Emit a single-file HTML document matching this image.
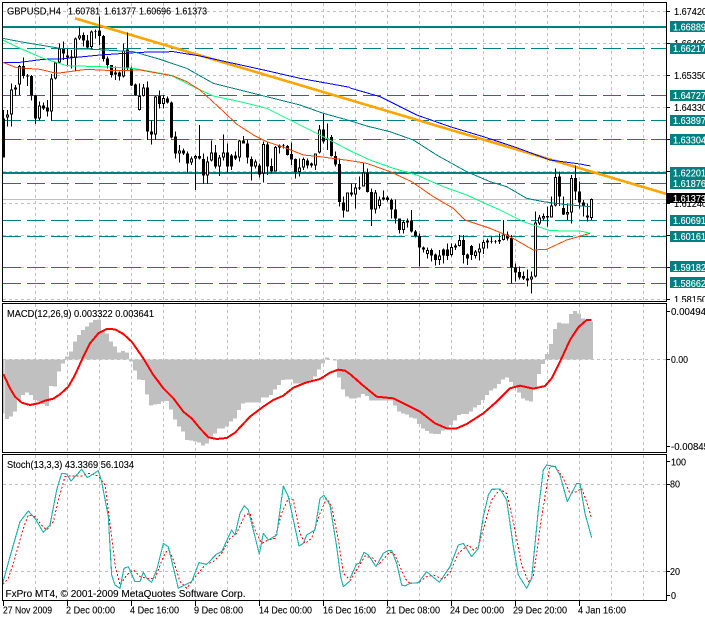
<!DOCTYPE html>
<html><head><meta charset="utf-8"><style>
html,body{margin:0;padding:0;background:#fff;width:705px;height:618px;overflow:hidden}
svg{display:block}
text{font-family:"Liberation Sans",sans-serif;font-size:10.5px;fill:#000;stroke:#000;stroke-width:.12px}
.w{fill:#fff;stroke:#fff}
</style></head><body>
<svg width="705" height="618" viewBox="0 0 705 618" xmlns="http://www.w3.org/2000/svg">
<rect width="705" height="618" fill="#fff"/>
<!-- grids -->
<g stroke="#c0c0c0" stroke-width="1" stroke-dasharray="3 3" fill="none" shape-rendering="crispEdges">
<path d="M35.5 3V301M67.5 3V301M99.5 3V301M131.5 3V301M163.5 3V301M195.5 3V301M227.5 3V301M259.5 3V301M291.5 3V301M323.5 3V301M355.5 3V301M387.5 3V301M419.5 3V301M451.5 3V301M483.5 3V301M515.5 3V301M547.5 3V301M579.5 3V301M611.5 3V301M643.5 3V301"/>
<path d="M35.5 304V452M67.5 304V452M99.5 304V452M131.5 304V452M163.5 304V452M195.5 304V452M227.5 304V452M259.5 304V452M291.5 304V452M323.5 304V452M355.5 304V452M387.5 304V452M419.5 304V452M451.5 304V452M483.5 304V452M515.5 304V452M547.5 304V452M579.5 304V452M611.5 304V452M643.5 304V452"/>
<path d="M35.5 455V600M67.5 455V600M99.5 455V600M131.5 455V600M163.5 455V600M195.5 455V600M227.5 455V600M259.5 455V600M291.5 455V600M323.5 455V600M355.5 455V600M387.5 455V600M419.5 455V600M451.5 455V600M483.5 455V600M515.5 455V600M547.5 455V600M579.5 455V600M611.5 455V600M643.5 455V600"/>
<path d="M3 11.5H666M3 43.5H666M3 75.5H666M3 107.5H666M3 139.5H666M3 171.5H666M3 203.5H666M3 235.5H666M3 267.5H666M3 299.5H666M3 359.5H666M3 484.5H666M3 571.5H666"/>
</g>
<path d="M3 199.5H666" stroke="#c0c0c0" shape-rendering="crispEdges"/>
<!-- level lines -->
<g stroke="#008080" fill="none" shape-rendering="crispEdges">
<path d="M3 27H666M3 173H666" stroke-width="2"/>
<path stroke-dasharray="18 6" d="M3 48.5H666M3 95.5H666M3 120.5H666M3 139.5H666M3 183.5H666M3 220.5H666M3 236.5H666M3 267.5H666M3 283.5H666"/>
</g>
<!-- trend -->
<path d="M75 18.3L666.7 194" stroke="#ffa500" stroke-width="2.6" fill="none" shape-rendering="crispEdges"/>
<!-- candles left -->
<g transform="translate(.167 0) scale(.33333)" fill="none" shape-rendering="crispEdges" stroke="#000">
<path stroke-width="3" d="M10 330V472M22 330V380M34 250V380M46 255V288M58 195V285M70 172V235M82 222V258M94 225V302M106 285V372M118 305V362M130 308V330M142 300V350M154 222V362M166 185V238M178 130V192M190 125V180M202 145V200M214 150V205M226 112V215M238 80V120M250 98V140M262 105V145M274 92V145M286 88V115M298 50V135M310 105V185M322 170V205M334 195V232M346 200V240M358 215V242M370 130V232M382 98V210M394 200V258M406 250V288M418 250V332M430 252V290M442 245V420M454 360V434M466 288V420M478 272V325M490 285V325M502 290V310M514 305V415M526 395V475M538 435V488M550 445V465M562 455V518M574 470V495M586 465V570M598 375V478M610 460V552M622 470V552M634 422V485M646 435V505M658 465V528M670 403V482M682 430V518M694 462V510M706 455V480M718 420V485M730 408V430M742 420V490M754 470V542M766 478V505M778 490V532M790 425V548M802 425V525M814 475V520M826 438V515M838 433V460M850 432V445M862 435V466M874 428V495M886 475V535M898 475V530M910 472V510M922 475V505M934 488V503M946 462V510M958 375V460M970 342V430M982 370V450M994 405V470M1006 455V500M1018 475V620M1030 590V652M1042 577V635"/>
<path stroke-width="9" d="M10 355V472M22 343V353M34 268V344M46 262V268M58 198V254M70 198V228M82 226V229M94 228V287M106 286V356M118 316V356M130 316V325M142 322V335M154 235V334M166 187V235M178 146V187M190 147V161M202 166V172M214 170V174M226 115V172M238 106V115M250 105V122M262 122V143M274 94V141M286 94V96M298 92V108M310 108V177M322 175V195M334 195V225M346 217V224M358 217V230M370 151V230M382 148V205M394 205V256M406 254V285M418 288V330M430 262V288M442 262V394M454 394V404M466 289V404M478 288V312M490 294V312M502 295V308M514 307V412M526 409V460M538 451V460M550 451V460M562 460V490M574 475V488M586 468V476M598 468V476M610 477V526M622 484V526M634 457V482M646 457V500M658 472V500M670 457V473M682 457V500M694 466V500M706 466V476M718 421V473M730 421V430M742 431V473M754 477V500M766 484V500M778 497V523M790 432V520M802 434V500M814 498V515M826 441V515M838 436V442M850 436V438M862 438V465M874 462V478M886 477V516M898 503V516M910 477V503M922 482V497M934 490V497M946 460V496M958 388V458M970 388V425M982 415V420M994 411V468M1006 468V494M1018 492V606M1030 607V632M1042 577V634"/>
<path stroke="#fff" stroke-width="3" d="M22 346V350M34 271V341M46 265V265M58 201V251M118 319V353M154 238V331M166 190V232M178 149V184M226 118V169M238 109V112M274 97V138M346 220V221M370 154V227M418 291V327M430 265V285M466 292V401M490 297V309M538 454V457M574 478V485M586 471V473M622 487V523M634 460V479M658 475V497M670 460V470M718 424V470M766 487V497M790 435V517M826 444V512M838 439V439M898 506V513M910 480V500M946 463V493M958 391V455M982 418V418M1042 580V631"/>
</g>
<!-- candles right -->
<g transform="translate(350.167 0) scale(.33333)" fill="none" shape-rendering="crispEdges" stroke="#000">
<path stroke-width="3" d="M4 550V590M16 550V625M28 530V570M40 490V560M52 505V578M64 565V678M76 570V640M88 590V625M100 572V602M112 588V605M124 595V655M136 598V670M148 655V700M160 660V700M172 655V682M184 630V698M196 690V712M208 700V800M220 740V758M232 742V775M244 745V785M256 760V797M268 750V795M280 745V790M292 730V780M304 730V770M316 730V750M328 705V740M340 705V790M352 760V795M364 735V780M376 750V775M388 730V782M400 720V762M412 715V745M424 710V730M436 720V730M448 700V732M460 660V722M472 695V722M484 705V850M496 790V845M508 800V838M520 815V840M532 808V860M544 815V880M556 635V832M568 645V675M580 640V662M592 620V680M604 590V652M616 505V620M628 515V618M640 590V645M652 610V660M664 525V670M676 497V600M688 545V625M700 600V650M712 610V665M724 595V660"/>
<path stroke-width="9" d="M4 577V583M16 562V584M28 562V566M40 518V560M52 518V576M64 576V628M76 577V628M88 598V618M100 592V598M112 592V600M124 600V628M136 628V656M148 655V690M160 666V690M172 661V667M184 661V694M196 694V708M208 708V743M220 743V748M232 750V762M244 750V766M256 764V780M268 766V780M280 748V766M292 748V768M304 741V765M316 737V742M328 720V738M340 720V765M352 764V775M364 738V765M376 755V768M388 745V758M400 726V746M412 722V728M424 724V726M436 723V725M448 720V724M460 703V720M472 703V716M484 714V802M496 802V818M508 816V833M520 828V836M532 836V842M544 829V838M556 667V830M568 652V670M580 648V655M592 648V652M604 616V652M616 531V616M628 530V590M640 624V643M652 636V643M664 534V638M676 534V574M688 574V608M700 607V618M712 646V652M724 597V654"/>
<path stroke="#fff" stroke-width="3" d="M16 565V581M40 521V557M76 580V625M88 601V615M100 595V595M160 669V687M172 664V664M232 753V759M268 769V777M304 744V762M316 740V740M328 723V735M376 758V765M388 748V755M400 729V743M412 725V725M448 722V722M460 706V717M544 832V835M556 670V827M568 655V667M580 651V652M604 619V649M616 534V613M652 639V640M664 537V635M724 600V651"/>
</g>
<!-- moving averages left -->
<g transform="scale(.33333)" fill="none" stroke-width="3" stroke-linejoin="round" shape-rendering="crispEdges">
<path stroke="#0000ff" d="M8 187L60 187 130 178 180 177 300 165 420 157 520 155 600 168 700 190 800 212 900 235 1050 262"/>
<path stroke="#008080" d="M8 115L60 125 180 145 280 148 400 155 480 178 560 205 640 250 720 270 800 290 900 315 970 340 1050 362"/>
<path stroke="#00ff7f" d="M8 120L60 145 130 175 200 197 300 200 400 205 510 225 590 265 640 288 720 305 800 325 880 365 960 405 1050 452"/>
<path stroke="#ff4500" d="M8 187L50 203 120 208 170 220 260 208 340 212 420 210 520 228 560 245 600 270 660 325 710 372 760 405 800 425 860 445 910 465 960 470 1050 482"/>
</g>
<g transform="translate(350 0) scale(.33333)" fill="none" stroke-width="3" stroke-linejoin="round" shape-rendering="crispEdges">
<path stroke="#0000ff" d="M0 264L90 290 200 345 300 380 400 410 500 443 600 480 690 492 722 498"/>
<path stroke="#008080" d="M0 362L50 378 120 395 190 420 260 465 350 515 420 545 470 560 530 595 580 605 640 613 720 620"/>
<path stroke="#00ff7f" d="M0 452L60 480 130 505 200 525 280 560 350 585 450 630 520 665 600 692 690 693 722 700"/>
<path stroke="#ff4500" d="M0 482L50 490 120 515 185 545 250 590 310 625 345 660 420 685 480 710 550 750 590 748 650 720 720 700"/>
</g>
<!-- MACD histogram -->
<g transform="translate(-.33 300) scale(.33333)" fill="none" stroke="#c0c0c0" stroke-width="12" shape-rendering="crispEdges">
<path d="M22 178V357M34 178V350M46 178V335M58 178V300M70 178V285M82 178V277M94 178V285M106 178V300M118 178V305M130 178V312M142 178V318M154 178V258M166 178V260M178 178V215M190 178V190M202 178V170M214 178V155M226 178V125M238 178V105M250 178V90M262 178V80M274 178V68M286 178V60M298 178V58M310 178V95M322 178V100M334 178V125M346 178V140M358 178V158M370 178V153M382 178V158M394 178V185M406 178V212M418 178V238M430 178V240M442 178V283M454 178V317M466 178V314M478 178V312M490 178V305M502 178V303M514 178V328M526 178V358M538 178V380M550 178V395M562 178V420M574 178V422M586 178V425M598 178V428M610 178V437M622 178V430M634 178V410M646 178V400M658 178V385M670 178V385M682 178V380M694 178V365M706 178V355M718 178V330M730 178V310M742 178V308M754 178V308M766 178V308M778 178V308M790 178V292M802 178V292M814 178V285M826 178V268M838 178V255M850 178V240M862 178V238M874 178V238M886 178V250M898 178V250M910 178V250M922 178V250M934 178V240M946 178V230M958 178V208M970 178V190M982 178V172M994 178V178M1006 178V182M1018 178V232M1030 178V268M1042 178V290"/>
<path stroke-width="6" d="M11 178V340"/>
</g>
<g transform="translate(349.67 300) scale(.33333)" fill="none" stroke="#c0c0c0" stroke-width="12" shape-rendering="crispEdges">
<path d="M4 178V295M16 178V296M28 178V292M40 178V282M52 178V288M64 178V302M76 178V302M88 178V302M100 178V302M112 178V302M124 178V302M136 178V316M148 178V335M160 178V340M172 178V343M184 178V352M196 178V355M208 178V372M220 178V385M232 178V393M244 178V400M256 178V402M268 178V402M280 178V392M292 178V388M304 178V375M316 178V362M328 178V345M340 178V342M352 178V342M364 178V335M376 178V322M388 178V315M400 178V300M412 178V285M424 178V272M436 178V265M448 178V252M460 178V238M472 178V232M484 178V246M496 178V262M508 178V278M520 178V295M532 178V302M544 178V305M556 178V262M568 178V222M580 178V192M592 178V162M604 178V132M616 178V87M628 178V67M640 178V70M652 178V70M664 178V42M676 178V33M688 178V40M700 178V55M712 178V58M724 178V65"/>
</g>
<path d="M3 359.5H666" stroke="#c0c0c0" stroke-dasharray="3 3" shape-rendering="crispEdges" opacity=".9"/>
<!-- MACD line -->
<g fill="none" stroke="#ff0000" stroke-width="6" stroke-linejoin="round" shape-rendering="crispEdges">
<path transform="translate(0 300) scale(.33333)" d="M10 222L30 265 45 290 65 308 90 315 115 310 135 302 160 296 180 283 205 260 225 225 250 170 270 130 295 100 320 87 345 88 370 102 395 125 430 175 460 225 490 265 520 295 550 335 575 355 600 385 625 412 650 417 680 414 705 398 750 350 790 320 820 300 850 287 880 263 920 247 960 237 990 218 1015 209 1035 212 1050 222"/>
<path transform="translate(350 300) scale(.33333)" d="M0 222L35 253 80 290 130 295 170 315 210 335 255 370 290 385 320 385 350 372 400 340 440 305 480 265 510 257 550 266 585 258 605 235 630 185 660 120 685 82 710 60 724 60"/>
</g>
<!-- Stoch -->
<g fill="none" stroke="#ff0000" stroke-width="3" stroke-dasharray="6 6" shape-rendering="crispEdges">
<path transform="translate(0 450) scale(.33333)" d="M8 403L25 385 40 340 70 235 85 195 105 200 125 225 140 240 160 215 175 150 195 80 215 78 245 78 265 70 295 78 315 105 330 220 345 345 360 405 380 375 400 360 420 380 440 385 465 385 490 320 505 295 520 330 540 395 560 415 590 375 615 345 640 335 665 310 690 265 710 250 735 195 750 190 765 240 785 280 805 270 825 265 845 190 865 145 880 150 900 250 915 280 935 265 960 190 980 145 995 170 1015 270 1030 370 1050 390"/>
<path transform="translate(350 450) scale(.33333)" d="M0 393L20 360 45 318 70 325 85 345 120 305 135 315 165 385 180 400 205 398 230 380 250 375 280 388 300 368 325 310 355 285 370 300 385 290 405 220 425 150 450 118 470 130 490 215 515 345 535 395 550 380 575 200 600 50 615 48 640 85 660 130 680 125 695 115 715 170 724 205"/>
</g>
<g fill="none" stroke="#20b2aa" stroke-width="3.4" stroke-linejoin="round" shape-rendering="crispEdges">
<path transform="translate(0 450) scale(.33333)" d="M8 400L30 320 60 215 85 183 105 205 130 247 150 225 170 120 185 70 200 72 213 93 245 58 262 83 295 62 305 95 325 200 335 375 345 405 360 415 372 355 385 350 405 395 420 395 430 367 440 385 455 397 470 360 490 280 505 290 535 415 575 395 597 338 620 343 650 312 665 305 695 240 705 255 720 190 733 167 745 180 778 312 790 250 805 270 830 255 850 108 865 140 897 288 910 280 920 255 945 240 960 145 972 136 990 165 1010 290 1022 380 1030 410 1050 393"/>
<path transform="translate(350 450) scale(.33333)" d="M0 385L20 342 28 340 42 307 55 315 78 350 100 310 115 301 125 301 140 340 155 405 165 408 180 400 205 398 230 365 268 397 300 350 325 285 340 280 365 320 385 295 400 200 415 135 425 118 450 117 470 150 490 290 505 375 530 415 545 385 565 180 580 60 590 45 615 50 630 75 652 155 680 100 690 100 705 190 725 263"/>
</g>
<!-- frames -->
<g fill="none" stroke="#000" stroke-width="1" shape-rendering="crispEdges">
<path d="M2.5 2.5H666.5V301.5H2.5ZM2.5 303.5H666.5V452.5H2.5ZM2.5 454.5H666.5V600.5H2.5Z"/>
<path d="M667 11.5H670M667 43.5H670M667 75.5H670M667 107.5H670M667 139.5H670M667 171.5H670M667 203.5H670M667 235.5H670M667 267.5H670M667 299.5H670M667 359.5H670M667 311.5H670M667 446.5H670M667 461.5H670M667 484.5H670M667 571.5H670M667 595.5H670"/>
<path d="M3.5 601V606M67.5 601V606M131.5 601V606M195.5 601V606M259.5 601V606M323.5 601V606M387.5 601V606M451.5 601V606M515.5 601V606M579.5 601V606"/>
</g>
<!-- chart text -->
<text x="7" y="14.5" textLength="54" lengthAdjust="spacingAndGlyphs">GBPUSD,H4</text>
<text x="68" y="14.5" textLength="32" lengthAdjust="spacingAndGlyphs">1.60781</text>
<text x="104" y="14.5" textLength="32" lengthAdjust="spacingAndGlyphs">1.61377</text>
<text x="139" y="14.5" textLength="32" lengthAdjust="spacingAndGlyphs">1.60696</text>
<text x="175" y="14.5" textLength="32" lengthAdjust="spacingAndGlyphs">1.61373</text>
<text x="7" y="317" textLength="147" lengthAdjust="spacingAndGlyphs">MACD(12,26,9) 0.003322 0.003641</text>
<text x="7" y="468" textLength="127" lengthAdjust="spacingAndGlyphs">Stoch(13,3,3) 43.3369 56.1034</text>
<text x="5.5" y="597" textLength="240" lengthAdjust="spacingAndGlyphs">FxPro MT4, © 2001-2009 MetaQuotes Software Corp.</text>
<!-- axis text -->
<text x="674" y="15" textLength="33" lengthAdjust="spacingAndGlyphs">1.67420</text>
<text x="674" y="47" textLength="33" lengthAdjust="spacingAndGlyphs">1.66400</text>
<text x="674" y="79" textLength="33" lengthAdjust="spacingAndGlyphs">1.65350</text>
<text x="674" y="111" textLength="33" lengthAdjust="spacingAndGlyphs">1.64330</text>
<text x="674" y="207" textLength="33" lengthAdjust="spacingAndGlyphs">1.61240</text>
<text x="674" y="303" textLength="33" lengthAdjust="spacingAndGlyphs">1.58150</text>
<rect x="667" y="302" width="38" height="2" fill="#fff"/>
<path d="M2 303.5H667" stroke="#000" shape-rendering="crispEdges"/>
<path d="M2 301.5H667" stroke="#000" shape-rendering="crispEdges"/>
<!-- labels -->
<g fill="#008080" shape-rendering="crispEdges">
<rect x="670" y="21" width="35" height="11"/><rect x="670" y="43" width="35" height="11"/><rect x="670" y="90" width="35" height="11"/><rect x="670" y="115" width="35" height="11"/><rect x="670" y="134" width="35" height="11"/><rect x="670" y="167" width="35" height="22"/><rect x="670" y="215" width="35" height="11"/><rect x="670" y="231" width="35" height="11"/><rect x="670" y="261" width="35" height="11"/><rect x="670" y="277" width="35" height="11"/>
</g>
<rect x="667" y="193" width="38" height="10" fill="#000" shape-rendering="crispEdges"/>
<text class="w" x="673" y="30.5" textLength="33" lengthAdjust="spacingAndGlyphs">1.66889</text>
<text class="w" x="673" y="52" textLength="33" lengthAdjust="spacingAndGlyphs">1.66217</text>
<text class="w" x="673" y="99" textLength="33" lengthAdjust="spacingAndGlyphs">1.64727</text>
<text class="w" x="673" y="124" textLength="33" lengthAdjust="spacingAndGlyphs">1.63897</text>
<text class="w" x="673" y="143.5" textLength="33" lengthAdjust="spacingAndGlyphs">1.63304</text>
<text class="w" x="673" y="176.5" textLength="33" lengthAdjust="spacingAndGlyphs">1.62201</text>
<text class="w" x="673" y="187" textLength="33" lengthAdjust="spacingAndGlyphs">1.61876</text>
<text class="w" x="673" y="202" textLength="33" lengthAdjust="spacingAndGlyphs">1.61373</text>
<text class="w" x="673" y="224" textLength="33" lengthAdjust="spacingAndGlyphs">1.60691</text>
<text class="w" x="673" y="240" textLength="33" lengthAdjust="spacingAndGlyphs">1.60161</text>
<text class="w" x="673" y="271" textLength="33" lengthAdjust="spacingAndGlyphs">1.59182</text>
<text class="w" x="673" y="287" textLength="33" lengthAdjust="spacingAndGlyphs">1.58662</text>
<text x="671" y="315" textLength="35" lengthAdjust="spacingAndGlyphs">0.00494</text>
<text x="671" y="363" textLength="17" lengthAdjust="spacingAndGlyphs">0.00</text>
<text x="671" y="450" textLength="38" lengthAdjust="spacingAndGlyphs">-0.00845</text>
<text x="671" y="465.5" textLength="15" lengthAdjust="spacingAndGlyphs">100</text>
<text x="670" y="487.5" textLength="10" lengthAdjust="spacingAndGlyphs">80</text>
<text x="670" y="575" textLength="10" lengthAdjust="spacingAndGlyphs">20</text>
<text x="671" y="599" textLength="5" lengthAdjust="spacingAndGlyphs">0</text>
<text x="3" y="613.5" textLength="49" lengthAdjust="spacingAndGlyphs">27 Nov 2009</text>
<text x="66" y="613.5" textLength="49" lengthAdjust="spacingAndGlyphs">2 Dec 00:00</text>
<text x="130" y="613.5" textLength="49" lengthAdjust="spacingAndGlyphs">4 Dec 16:00</text>
<text x="194" y="613.5" textLength="49" lengthAdjust="spacingAndGlyphs">9 Dec 08:00</text>
<text x="259" y="613.5" textLength="53" lengthAdjust="spacingAndGlyphs">14 Dec 00:00</text>
<text x="323" y="613.5" textLength="53" lengthAdjust="spacingAndGlyphs">16 Dec 16:00</text>
<text x="386" y="613.5" textLength="54" lengthAdjust="spacingAndGlyphs">21 Dec 08:00</text>
<text x="450" y="613.5" textLength="54" lengthAdjust="spacingAndGlyphs">24 Dec 00:00</text>
<text x="513" y="613.5" textLength="54" lengthAdjust="spacingAndGlyphs">29 Dec 20:00</text>
<text x="578" y="613.5" textLength="48" lengthAdjust="spacingAndGlyphs">4 Jan 16:00</text>
</svg>
</body></html>
